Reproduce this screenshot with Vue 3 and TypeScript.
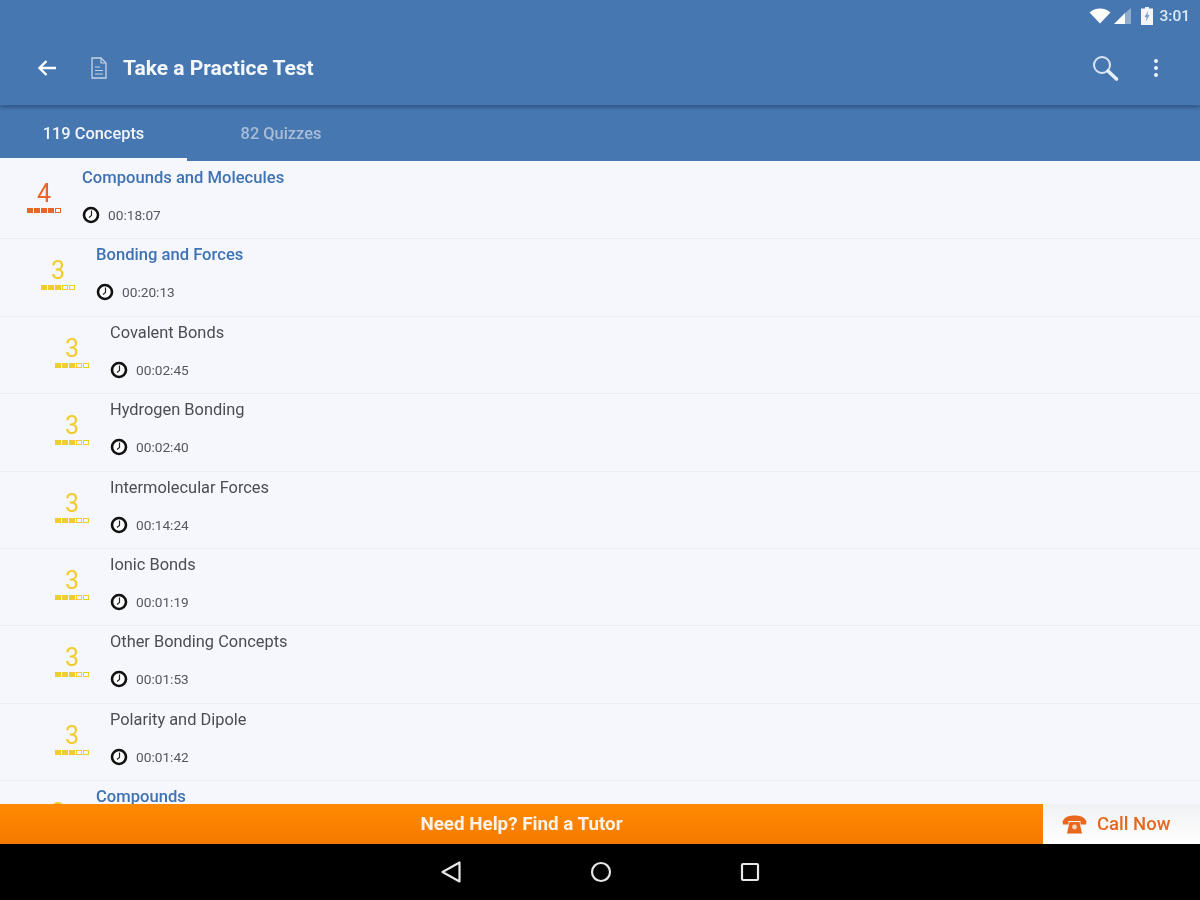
<script setup lang="ts">
interface Concept {
  title: string;
  time: string;
  level: number;
  score: number;
}

const concepts: Concept[] = [
  { title: 'Compounds and Molecules', time: '00:18:07', level: 0, score: 4 },
  { title: 'Bonding and Forces', time: '00:20:13', level: 1, score: 3 },
  { title: 'Covalent Bonds', time: '00:02:45', level: 2, score: 3 },
  { title: 'Hydrogen Bonding', time: '00:02:40', level: 2, score: 3 },
  { title: 'Intermolecular Forces', time: '00:14:24', level: 2, score: 3 },
  { title: 'Ionic Bonds', time: '00:01:19', level: 2, score: 3 },
  { title: 'Other Bonding Concepts', time: '00:01:53', level: 2, score: 3 },
  { title: 'Polarity and Dipole', time: '00:01:42', level: 2, score: 3 },
  { title: 'Compounds', time: '00:05:10', level: 1, score: 3 },
];
</script>

<template>
  <div class="screen">
    <header class="appbar">
      <div class="status">
        <svg width="22" height="16" viewBox="0 0 22 16">
          <path d="M0.5 4.5C6 -1 16 -1 21.5 4.5L11 15.5Z" fill="#fff" />
        </svg>
        <svg width="18" height="16" viewBox="0 0 18 16">
          <path d="M0 16L11 5V16Z" fill="#fff" />
          <path d="M11 5L17 0V16H11Z" fill="#fff" opacity="0.4" />
        </svg>
        <svg class="battery" width="12" height="18" viewBox="0 0 12 18">
          <path d="M4 0H8V1.5H12V18H0V1.5H4Z" fill="#f2f5fa" />
          <path d="M7 4L3.5 10H5.5L5 14.5L8.5 8H6.5Z" fill="#7d9fc8" />
        </svg>
        <span class="clock">3:01</span>
      </div>
      <div class="toolbar">
        <svg class="back" width="20" height="18" viewBox="0 0 20 18">
          <path d="M19 9H3M9.5 2L2.5 9L9.5 16" fill="none" stroke="#fff" stroke-width="2.4" />
        </svg>
        <svg class="doc" width="16" height="22" viewBox="0 0 16 22">
          <path d="M1 1H10L15 6V21H1Z" fill="none" stroke="#c3d3e6" stroke-width="1.3" />
          <path d="M10 1V6H15M4 10H9M4 13.5H12M4 17H12" fill="none" stroke="#c3d3e6" stroke-width="1.1" />
        </svg>
        <span class="title">Take a Practice Test</span>
        <svg class="search" width="28" height="28" viewBox="0 0 28 28">
          <circle cx="11" cy="11" r="8" fill="none" stroke="#dbe5f0" stroke-width="2" />
          <path d="M17 17L25.5 25" stroke="#e8eef6" stroke-width="3.6" stroke-linecap="round" />
        </svg>
        <div class="more"><i></i><i></i><i></i></div>
      </div>
    </header>

    <nav class="tabs">
      <div class="tab active">119 Concepts</div>
      <div class="tab">82 Quizzes</div>
    </nav>

    <main class="list">
      <div
        v-for="c in concepts"
        :key="c.title"
        :class="['row', 'level-' + c.level, c.score === 4 ? 'high' : 'mid']"
      >
        <div class="score">
          <div class="num">{{ c.score }}</div>
          <div class="pips">
            <i v-for="n in 5" :key="n" :class="{ on: n <= c.score }"></i>
          </div>
        </div>
        <div class="info">
          <div class="name">{{ c.title }}</div>
          <div class="time">
            <svg width="18" height="18" viewBox="0 0 18 18">
              <circle cx="9" cy="9" r="7" fill="#fff" stroke="#111" stroke-width="2.6" />
              <path d="M9.5 4.5V9.5L7 11.5" fill="none" stroke="#222" stroke-width="1.2" />
            </svg>
            <span>{{ c.time }}</span>
          </div>
        </div>
      </div>
    </main>

    <footer class="cta">
      <div class="help">Need Help? Find a Tutor</div>
      <div class="call">
        <svg width="25" height="19" viewBox="0 0 25 19">
          <path d="M0.5 6.5C3 1 8 0.5 12.5 0.5S22 1 24.5 6.5L24 9.5H18.5V6H6.5V9.5H1Z" fill="#e8671d" />
          <path d="M7.5 7H17.5L20 18.5H5Z" fill="#e8671d" />
          <circle cx="12.5" cy="12" r="2.4" fill="#f6d5bd" />
        </svg>
        <span>Call Now</span>
      </div>
    </footer>

    <div class="sysnav">
      <svg width="22" height="24" viewBox="0 0 22 24">
        <path d="M19.5 2.5V21.5L2.5 12Z" fill="none" stroke="#e6e6e6" stroke-width="2.2" stroke-linejoin="round" />
      </svg>
      <svg width="22" height="22" viewBox="0 0 22 22">
        <circle cx="11" cy="11" r="9" fill="none" stroke="#e6e6e6" stroke-width="2.2" />
      </svg>
      <svg width="20" height="20" viewBox="0 0 20 20">
        <rect x="2" y="2" width="16" height="16" rx="1" fill="none" stroke="#e6e6e6" stroke-width="2.2" />
      </svg>
    </div>
  </div>
</template>

<style>
body {
  background: #f5f7fc;
}
</style>

<style scoped>
.screen {
  width: 1200px;
  height: 900px;
  display: flex;
  flex-direction: column;
  overflow: hidden;
  font-family: Roboto, "Liberation Sans", sans-serif;
  background: #f5f7fc;
  filter: blur(0.45px);
}

.appbar {
  height: 105px;
  flex: none;
  background: #4677b1;
  box-shadow: 0 3px 3px rgba(30, 60, 100, 0.45);
  position: relative;
  z-index: 1;
}

.status {
  height: 32px;
  display: flex;
  align-items: center;
  justify-content: flex-end;
  gap: 3px;
  padding-right: 10px;
}

.battery {
  margin-left: 6px;
}

.clock {
  margin-left: 3px;
  font-size: 15.5px;
  font-weight: 500;
  color: #dfe8f3;
}

.toolbar {
  height: 72px;
  display: flex;
  align-items: center;
}

.back {
  margin-left: 37px;
}

.doc {
  margin-left: 34px;
}

.title {
  margin-left: 16px;
  font-size: 21px;
  font-weight: 700;
  color: #f4f7fb;
}

.search {
  margin-left: auto;
}

.more {
  display: flex;
  flex-direction: column;
  gap: 3px;
  margin: 0 42px 0 35px;
}

.more i {
  width: 4px;
  height: 4px;
  border-radius: 50%;
  background: #eef3f9;
}

.tabs {
  height: 56px;
  flex: none;
  display: flex;
  background: #4677b1;
}

.tab {
  width: 187px;
  padding: 3px 0 3px;
  box-sizing: border-box;
  display: flex;
  align-items: center;
  justify-content: center;
  font-size: 16.4px;
  font-weight: 500;
  color: #a9bdd6;
}

.tab + .tab {
  width: 188px;
}

.tab.active {
  color: #f2f5fa;
  padding-bottom: 0;
  border-bottom: 3px solid #f5f7fc;
}

.list {
  flex: 1;
  min-height: 0;
  overflow: hidden;
  padding-top: 1px;
}

.row {
  height: 77.4px;
  box-sizing: border-box;
  display: flex;
  border-bottom: 1px solid #ebedf2;
}

.level-0 {
  padding-left: 26px;
}

.level-1 {
  padding-left: 40px;
}

.level-2 {
  padding-left: 54px;
}

.score {
  width: 36px;
  flex: none;
  padding-top: 18px;
  display: flex;
  flex-direction: column;
  align-items: center;
}

.num {
  font-size: 25px;
  line-height: 28px;
}

.pips {
  display: flex;
  gap: 1px;
  margin-top: 0;
}

.pips i {
  width: 6px;
  height: 5px;
  box-sizing: border-box;
  border: 1px solid currentColor;
  background: transparent;
}

.pips i.on {
  background: currentColor;
}

.high .score {
  color: #e8662a;
}

.mid .score {
  color: #f2cb2c;
}

.info {
  margin-left: 20px;
  padding-top: 6px;
}

.name {
  height: 20px;
  line-height: 20px;
  font-size: 16.4px;
  color: #4a4d52;
}

.level-0 .name,
.level-1 .name {
  color: #3f72b3;
  font-weight: 500;
  font-size: 16.6px;
}

.time {
  margin-top: 18px;
  display: flex;
  align-items: center;
  gap: 8px;
  font-size: 13.7px;
  color: #55585c;
}

.cta {
  height: 40px;
  flex: none;
  display: flex;
}

.help {
  flex: 1;
  display: flex;
  align-items: center;
  justify-content: center;
  font-size: 18.8px;
  font-weight: 700;
  color: #fbf3ea;
  background: linear-gradient(#ff8a00, #f57a00);
}

.call {
  width: 157px;
  display: flex;
  align-items: center;
  gap: 10px;
  padding-left: 19px;
  box-sizing: border-box;
  font-size: 18.5px;
  font-weight: 500;
  color: #e8671d;
  background: linear-gradient(#f0f1f3, #fff);
}

.sysnav {
  height: 56px;
  flex: none;
  background: #000;
  display: flex;
  align-items: center;
  justify-content: center;
  gap: 128px;
}
</style>
